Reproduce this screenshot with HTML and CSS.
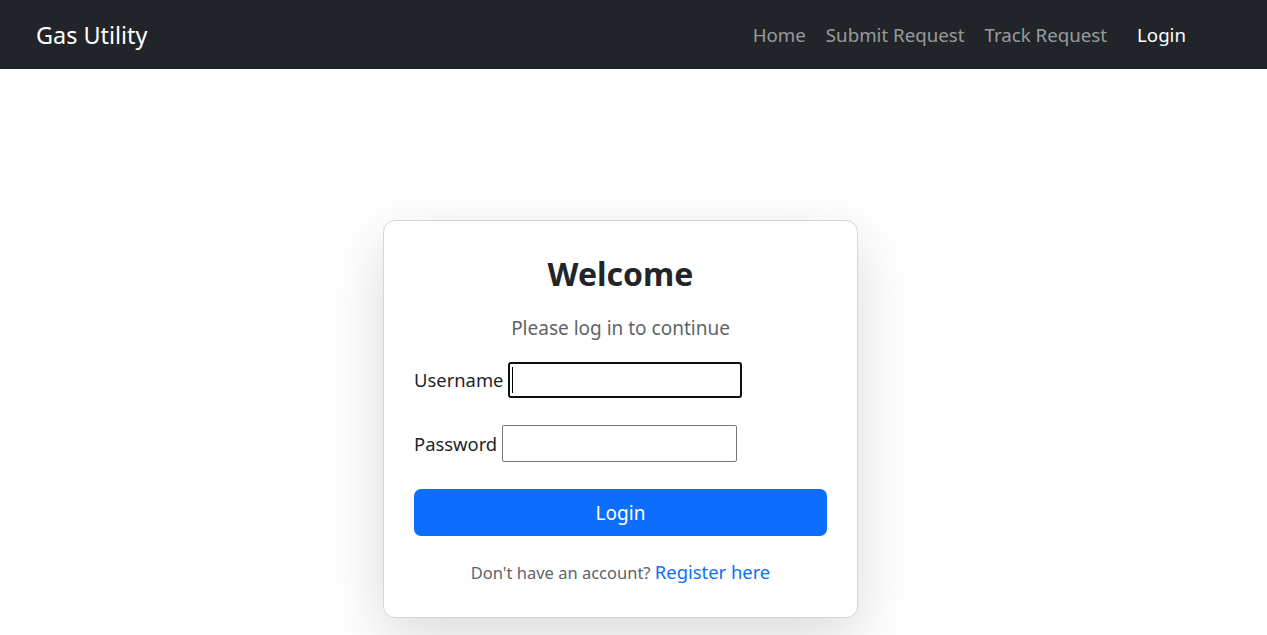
FILE: index.html
```html
<!DOCTYPE html>
<html lang="en">
<head>
<meta charset="utf-8">
<title>Gas Utility - Login</title>
<link rel="stylesheet" href="styles.css">
</head>
<body>
<nav class="navbar">
  <a class="brand" href="#">Gas Utility</a>
  <ul class="nav-links">
    <li><a href="#">Home</a></li>
    <li><a href="#">Submit Request</a></li>
    <li><a href="#">Track Request</a></li>
  </ul>
  <ul class="nav-auth">
    <li><a class="active" href="#">Login</a></li>
  </ul>
</nav>
<main class="page">
  <div class="card">
    <h2 class="title">Welcome</h2>
    <p class="subtitle">Please log in to continue</p>
    <form class="form">
      <div class="field">
        <label for="username">Username</label>
        <span class="input-wrap"><input id="username" class="input focused" type="text"><span class="caret"></span></span>
      </div>
      <div class="field">
        <label for="password">Password</label>
        <input id="password" class="input" type="password">
      </div>
      <button type="button" class="btn">Login</button>
    </form>
    <p class="register">Don't have an account? <a href="#">Register here</a></p>
  </div>
</main>
</body>
</html>
```

FILE: styles.css
```css
* { box-sizing: border-box; }
html, body { margin: 0; padding: 0; }
body {
  font-family: "Noto Sans", "Open Sans", sans-serif;
  color: #212529;
  background: #fff;
}
.navbar {
  height: 69px;
  background: #212529;
  display: flex;
  align-items: center;
  padding: 0 71px 0 36px;
}
.brand {
  color: #fff;
  text-decoration: none;
  font-size: 23.4px;
}
.nav-links, .nav-auth {
  list-style: none;
  margin: 0;
  padding: 0;
  display: flex;
}
.nav-links { margin-left: auto; }
.nav-auth { margin-left: 10px; }
.nav-links a, .nav-auth a {
  display: block;
  padding: 0 10px;
  font-size: 18.7px;
  color: rgba(255,255,255,0.55);
  text-decoration: none;
}
.nav-auth a.active { color: #fff; }
.page {
  display: flex;
  justify-content: flex-start;
  padding: 151px 0 40px 383px;
}
.card {
  width: 475px;
  border: 1px solid #d6d6d6;
  border-radius: 12px;
  padding: 30px 30px 31px;
  background: #fff;
  box-shadow: 0 20px 60px rgba(0,0,0,0.15);
}
.title {
  margin: 0;
  text-align: center;
  font-size: 32px;
  font-weight: 700;
  line-height: 45px;
}
.subtitle {
  margin: 17px 0 0;
  text-align: center;
  font-size: 19px;
  color: #5f6468;
  line-height: 30px;
}
.form { margin-top: 19px; }
.field {
  display: flex;
  align-items: center;
  gap: 5px;
  margin-bottom: 27px;
  font-size: 18.4px;
}
.field label { line-height: 30px; }
.input-wrap { position: relative; display: block; }
.input {
  display: block;
  width: 235px;
  height: 37px;
  border: 1px solid #767676;
  border-radius: 2px;
  font: inherit;
  padding: 0 4px;
  background: #fff;
}
.input.focused {
  width: 234px;
  height: 36px;
  border: 2px solid #101010;
  border-radius: 3px;
  outline: none;
}
.caret {
  position: absolute;
  left: 4px;
  top: 5px;
  width: 1px;
  height: 26px;
  background: #000;
}
.btn {
  display: block;
  width: 100%;
  height: 47px;
  border: none;
  border-radius: 7px;
  background: #0d6efd;
  color: #fff;
  font: inherit;
  font-size: 19px;
  cursor: pointer;
}
.register {
  margin: 23px 0 0;
  text-align: center;
  font-size: 16.5px;
  color: #5f6468;
  line-height: 26px;
}
.register a {
  color: #0d6efd;
  font-size: 18.4px;
  text-decoration: none;
}
```
